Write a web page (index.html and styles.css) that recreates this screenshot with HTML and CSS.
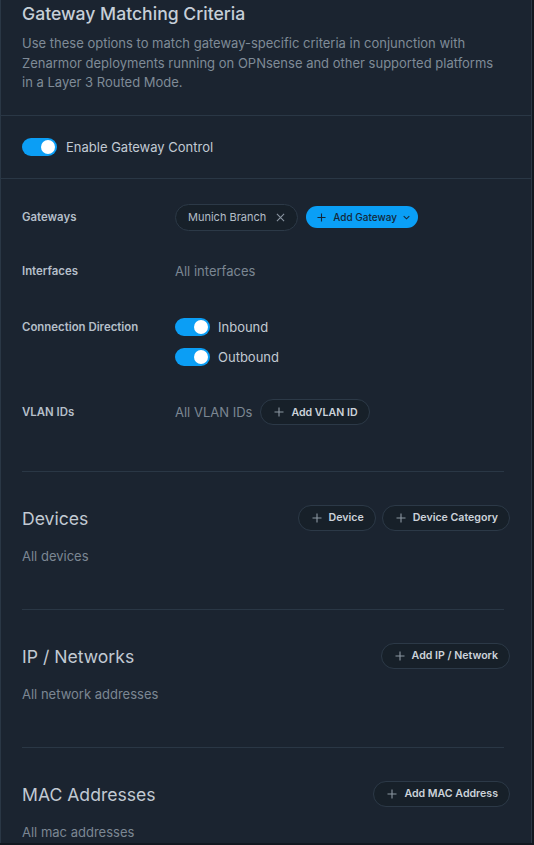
FILE: index.html
```html
<!DOCTYPE html>
<html>
<head>
<meta charset="utf-8">
<link rel="stylesheet" href="styles.css">
</head>
<body>
<div class="panel">
  <header class="intro">
    <h1 class="title">Gateway Matching Criteria</h1>
    <p class="desc">Use these options to match gateway-specific criteria in conjunction with Zenarmor deployments running on OPNsense and other supported platforms in a Layer 3 Routed Mode.</p>
  </header>

  <div class="enable">
    <span class="toggle"><span class="knob"></span></span>
    <span class="enable-label">Enable Gateway Control</span>
  </div>

  <div class="form">
    <div class="label">Gateways</div>
    <div class="value">
      <span class="chip">Munich Branch
        <svg class="x" viewBox="0 0 10 10" width="9" height="9"><path d="M1 1L9 9M9 1L1 9" stroke="#8a95a1" stroke-width="1.2" fill="none"/></svg>
      </span>
      <span class="add-primary">
        <svg viewBox="0 0 10 10" width="9" height="9"><path d="M5 0.5V9.5M0.5 5H9.5" stroke="#14283a" stroke-width="1.2" fill="none"/></svg>
        <span>Add Gateway</span>
        <svg viewBox="0 0 8 5" width="7" height="5"><path d="M0.8 0.8L4 4L7.2 0.8" stroke="#14283a" stroke-width="1.2" fill="none"/></svg>
      </span>
    </div>

    <div class="label">Interfaces</div>
    <div class="value"><span class="muted">All interfaces</span></div>

    <div class="label label-top">Connection Direction</div>
    <div class="value value-col">
      <div class="opt"><span class="toggle"><span class="knob"></span></span><span class="opt-label">Inbound</span></div>
      <div class="opt"><span class="toggle"><span class="knob"></span></span><span class="opt-label">Outbound</span></div>
    </div>

    <div class="label">VLAN IDs</div>
    <div class="value">
      <span class="muted">All VLAN IDs</span>
      <span class="btn">
        <svg viewBox="0 0 10 10" width="10" height="10"><path d="M5 0.5V9.5M0.5 5H9.5" stroke="#8c97a2" stroke-width="1.1" fill="none"/></svg>
        <span>Add VLAN ID</span>
      </span>
    </div>
  </div>

  <section class="sect">
    <div class="sect-head">
      <h2 class="sect-title">Devices</h2>
      <div class="btns">
        <span class="btn"><svg viewBox="0 0 10 10" width="10" height="10"><path d="M5 0.5V9.5M0.5 5H9.5" stroke="#8c97a2" stroke-width="1.1" fill="none"/></svg><span>Device</span></span>
        <span class="btn"><svg viewBox="0 0 10 10" width="10" height="10"><path d="M5 0.5V9.5M0.5 5H9.5" stroke="#8c97a2" stroke-width="1.1" fill="none"/></svg><span>Device Category</span></span>
      </div>
    </div>
    <div class="muted sect-text">All devices</div>
  </section>

  <section class="sect">
    <div class="sect-head">
      <h2 class="sect-title">IP / Networks</h2>
      <div class="btns">
        <span class="btn"><svg viewBox="0 0 10 10" width="10" height="10"><path d="M5 0.5V9.5M0.5 5H9.5" stroke="#8c97a2" stroke-width="1.1" fill="none"/></svg><span>Add IP / Network</span></span>
      </div>
    </div>
    <div class="muted sect-text">All network addresses</div>
  </section>

  <section class="sect">
    <div class="sect-head">
      <h2 class="sect-title">MAC Addresses</h2>
      <div class="btns">
        <span class="btn"><svg viewBox="0 0 10 10" width="10" height="10"><path d="M5 0.5V9.5M0.5 5H9.5" stroke="#8c97a2" stroke-width="1.1" fill="none"/></svg><span>Add MAC Address</span></span>
      </div>
    </div>
    <div class="muted sect-text">All mac addresses</div>
  </section>
</div>
</body>
</html>
```

FILE: styles.css
```css
* { box-sizing: border-box; }
html, body { margin: 0; padding: 0; }
body {
  background: #121820;
  font-family: Inter, "Noto Sans", "Liberation Sans", sans-serif;
  width: 534px;
  height: 845px;
  overflow: hidden;
}
.panel {
  width: 532px;
  height: 843px;
  overflow: hidden;
  background: #1b2430;
  border-left: 1px solid #2a3745;
  border-right: 1px solid #2a3745;
}
.intro {
  padding: 2px 22px 22px 21px;
  border-bottom: 1px solid #2a3745;
}
.title {
  margin: 0;
  font-size: 17.6px;
  line-height: 24px;
  font-weight: 500;
  color: #c6cfd8;
}
.desc {
  margin: 8px 0 0;
  max-width: 474px;
  font-size: 13px;
  line-height: 19.5px;
  color: #7f8b97;
}
.enable {
  display: flex;
  align-items: center;
  gap: 9px;
  padding: 22px 21px;
  border-bottom: 1px solid #2a3745;
}
.enable-label {
  font-size: 13px;
  color: #c2cad3;
}
.toggle {
  display: inline-flex;
  align-items: center;
  justify-content: flex-end;
  width: 35px;
  height: 18px;
  padding: 0 2px;
  border-radius: 9px;
  background: #0b9ef5;
  flex: none;
}
.knob {
  width: 14px;
  height: 14px;
  border-radius: 50%;
  background: #ffffff;
}
.form {
  display: grid;
  grid-template-columns: 153px 1fr;
  row-gap: 27px;
  padding: 25px 21px 45px;
}
.label {
  font-size: 11.4px;
  font-weight: 600;
  color: #b5bfc9;
  display: flex;
  align-items: center;
  min-height: 27px;
}
.label-top {
  align-items: flex-start;
  line-height: 30px;
}
.value {
  display: flex;
  align-items: center;
  gap: 8px;
  min-height: 27px;
}
.value-col {
  flex-direction: column;
  align-items: flex-start;
  gap: 0;
}
.opt {
  display: flex;
  align-items: center;
  gap: 8px;
  height: 30px;
}
.opt-label {
  font-size: 13px;
  color: #c2cad3;
}
.muted {
  font-size: 13px;
  color: #7b8793;
}
.chip {
  display: inline-flex;
  align-items: center;
  gap: 10px;
  height: 27px;
  padding: 0 12px 0 12px;
  border: 1px solid #2c3947;
  border-radius: 14px;
  background: #172029;
  font-size: 11px;
  color: #b3bdc7;
}
.add-primary {
  display: inline-flex;
  align-items: center;
  height: 22px;
  padding: 0 8px 0 11px;
  border-radius: 11px;
  background: #0a9ff6;
  font-size: 10px;
  font-weight: 500;
  color: #14283a;
}
.add-primary span { margin: 0 6px 0 7px; }
.btn {
  display: inline-flex;
  align-items: center;
  gap: 7px;
  height: 26px;
  padding: 0 11px 0 13px;
  border: 1px solid #2c3947;
  border-radius: 13px;
  background: #172029;
  font-size: 10.6px;
  font-weight: 600;
  color: #ccd3da;
  white-space: nowrap;
}
.sect {
  margin: 0 27px 0 21px;
  border-top: 1px solid #2a3745;
  padding: 33px 0 43px;
}
.sect-head {
  display: flex;
  align-items: center;
  justify-content: space-between;
  height: 26px;
  margin-right: -6px;
}
.sect-title {
  margin: 0;
  font-size: 17.6px;
  line-height: 26px;
  padding-top: 2px;
  font-weight: 400;
  color: #c2cad3;
}
.btns {
  display: flex;
  gap: 6px;
}
.sect-text {
  margin-top: 15px;
  line-height: 20px;
}
```
